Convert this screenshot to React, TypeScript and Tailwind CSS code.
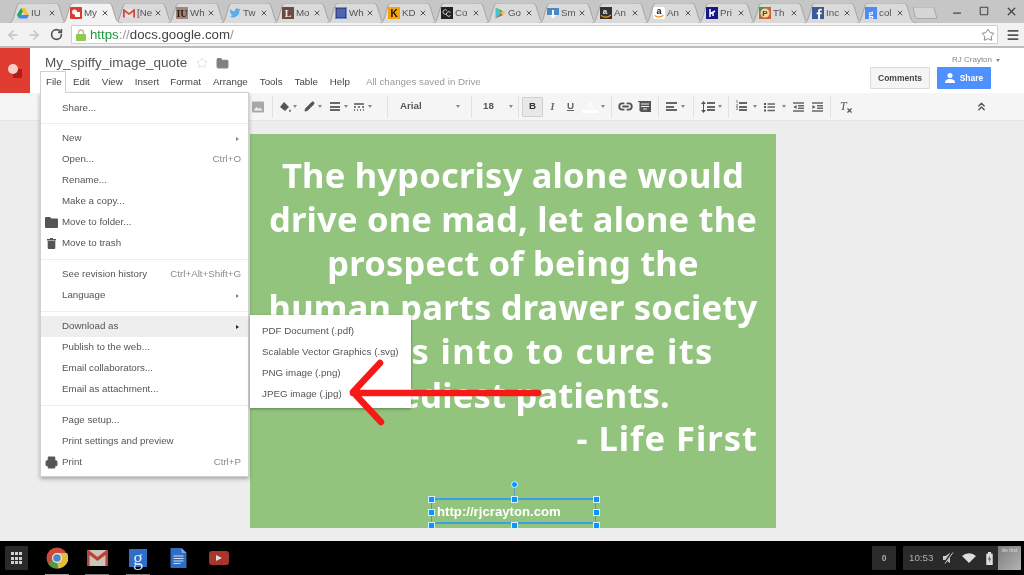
import { ArrowLeft, ArrowRight, RotateCw, Star, X, Minus, Square, ChevronsUp, Link2, Menu, Pencil, Printer, Folder } from "lucide-react";

const tabs = [
  { id: "drive", label: "IU" },
  { id: "docs", label: "My", active: true },
  { id: "gmail", label: "[Ne" },
  { id: "iu", label: "Wh" },
  { id: "twitter", label: "Tw" },
  { id: "l", label: "Mo" },
  { id: "grid", label: "Wh" },
  { id: "k", label: "KD" },
  { id: "cc", label: "Co" },
  { id: "play", label: "Go" },
  { id: "sm", label: "Sm" },
  { id: "amz", label: "An" },
  { id: "amz2", label: "An" },
  { id: "pri", label: "Pri" },
  { id: "p", label: "Th" },
  { id: "fb", label: "Inc" },
  { id: "g", label: "col" },
];

function Favicon({ id }: { id: string }) {
  const box = "w-3 h-3 shrink-0";
  const letter = (bg: string, fg: string, ch: string, family = "Liberation Serif") => (
    <svg viewBox="0 0 12 12" className={box}>
      <rect width="12" height="12" fill={bg} />
      <text x="6" y="10" fontSize="10" fontWeight="700" fill={fg} textAnchor="middle" fontFamily={family}>{ch}</text>
    </svg>
  );
  switch (id) {
    case "drive":
      return (
        <svg viewBox="0 0 12 12" className={box}>
          <path d="M4 1h4l4 7H8z" fill="#f6c42d" />
          <path d="M4 1l2 3.500-4 7L0 8z" fill="#1fa463" />
          <path d="M2 11.500l2-3.500h8l-2 3.500z" fill="#4285f4" />
        </svg>
      );
    case "docs":
      return (
        <svg viewBox="0 0 12 12" className={box}>
          <rect width="12" height="12" rx="1" fill="#dc3b30" />
          <rect x="2" y="2.500" width="5" height="5" rx="2.500" fill="#fff" />
          <rect x="5" y="5" width="5" height="5" fill="#fff" />
        </svg>
      );
    case "gmail":
      return (
        <svg viewBox="0 0 12 12" className={box}>
          <rect y="2" width="12" height="8.500" fill="#e8e4dc" />
          <path d="M0 2v8.500h1.800V5L6 8l4.200-3v5.500H12V2h-1L6 6 1 2z" fill="#d9443a" />
        </svg>
      );
    case "iu":
      return letter("#a1877a", "#2a1c14", "IU");
    case "twitter":
      return (
        <svg viewBox="0 0 24 24" className={box}>
          <path fill="#55acee" d="M23 5c-.8.400-1.700.600-2.600.700.900-.600 1.600-1.400 2-2.500-.900.500-1.900.900-2.900 1.100A4.500 4.500 0 0 0 11.800 8.500C8 8.300 4.700 6.500 2.500 3.800c-1.200 2-.600 4.600 1.400 6-.700 0-1.400-.200-2-.600 0 2.200 1.500 4 3.600 4.500-.700.200-1.400.200-2 .100.600 1.800 2.200 3.100 4.200 3.100A9 9 0 0 1 1 18.800 12.800 12.800 0 0 0 20.700 7.400c.900-.600 1.700-1.400 2.300-2.400z" />
        </svg>
      );
    case "l":
      return letter("#6b4a42", "#f2ece8", "L");
    case "grid":
      return (
        <svg viewBox="0 0 12 12" className={box}>
          <rect width="12" height="12" fill="#6f90cc" />
          <rect x="1" y="1" width="10" height="10" fill="#16227a" />
          <path d="M3 1v10M5 1v10M7 1v10M9 1v10M1 3h10M1 5h10M1 7h10M1 9h10" stroke="#a9bce6" strokeWidth=".5" />
        </svg>
      );
    case "k":
      return letter("#f4a30a", "#111", "K", "Liberation Sans");
    case "cc":
      return (
        <svg viewBox="0 0 12 12" className={box}>
          <rect width="12" height="12" fill="#222" />
          <path d="M6 3.500a2.300 2.300 0 1 0 0 3M9.500 5.500a2.300 2.300 0 1 0 0 3" stroke="#ccc" strokeWidth="1" fill="none" />
        </svg>
      );
    case "play":
      return (
        <svg viewBox="0 0 12 12" className={box}>
          <path d="M1.500 0.500v11l5.500-5.500z" fill="#3bc6d8" />
          <path d="M1.500 0.500l5.500 5.500 2-2z" fill="#4cb058" />
          <path d="M1.500 11.500l5.500-5.500 2 2z" fill="#e2483f" />
          <path d="M9 4l2.500 2L9 8 7 6z" fill="#f6c42d" />
        </svg>
      );
    case "sm":
      return (
        <svg viewBox="0 0 12 12" className={box}>
          <rect y="1" width="12" height="7" fill="#4a88c8" />
          <path d="M5 3h2v5h2l-3 3.500L3 8h2z" fill="#fff" />
        </svg>
      );
    case "amz":
      return (
        <svg viewBox="0 0 12 12" className={box}>
          <rect width="12" height="12" fill="#333" />
          <text x="5" y="7" fontSize="8" fontWeight="700" fill="#eee" textAnchor="middle" fontFamily="Liberation Sans">a</text>
          <path d="M1 8.500c3 2 7 2 10-.500" stroke="#f29a1f" strokeWidth="1.300" fill="none" />
        </svg>
      );
    case "amz2":
      return (
        <svg viewBox="0 0 12 12" className={box}>
          <rect width="12" height="12" rx="2" fill="#fff" />
          <text x="6" y="7" fontSize="9" fontWeight="700" fill="#111" textAnchor="middle" fontFamily="Liberation Sans">a</text>
          <path d="M1.500 8.500c3 2 6 2 9-.300" stroke="#f29a1f" strokeWidth="1.300" fill="none" />
        </svg>
      );
    case "pri":
      return (
        <svg viewBox="0 0 12 12" className={box}>
          <rect width="12" height="12" fill="#16188a" />
          <path d="M4 2v8M4 7l5-3M7 6v3" stroke="#fff" strokeWidth="1.500" fill="none" />
        </svg>
      );
    case "p":
      return (
        <svg viewBox="0 0 12 12" className={box}>
          <rect width="12" height="12" fill="#c8643a" />
          <rect width="6" height="6" fill="#4f8f5a" />
          <circle cx="6" cy="6" r="4.500" fill="#f0d9a0" />
          <text x="6" y="9" fontSize="8" fontWeight="700" fill="#5a3a1a" textAnchor="middle" fontFamily="Liberation Sans">P</text>
        </svg>
      );
    case "fb":
      return (
        <svg viewBox="0 0 12 12" className={box}>
          <rect width="12" height="12" fill="#3b5998" />
          <path d="M8 12V7.300h1.500l.3-1.800H8V4.400c0-.600.200-.900.900-.900h.9V1.900C9.500 1.800 9 1.800 8.400 1.800 7 1.800 6.100 2.600 6.100 4.200v1.300H4.600v1.800h1.500V12z" fill="#fff" />
        </svg>
      );
    default:
      return letter("#4c8bf0", "#fff", "g");
  }
}

function Tab({ id, label, active }: { id: string; label: string; active?: boolean }) {
  return (
    <div className={`relative w-[53px] h-[20px] shrink-0 flex items-center pl-[8px] ${active ? "z-10" : ""}`}>
      <svg viewBox="0 0 60 20" className="absolute left-0 top-0 w-[60px] h-[20px]">
        <path
          d="M0 20 C3 20 3 18 4 16 L8 3 C9 1 10 0 12 0 L46 0 C48 0 49 1 50 3 L54 16 C55 18 56 20 60 20"
          fill={active ? "#f2f2f2" : "#dadada"}
          stroke="#a4a4a4"
          strokeWidth="1"
        />
      </svg>
      <div className="relative flex items-center w-full">
        <Favicon id={id} />
        <span className="ml-[2px] w-[16px] overflow-hidden whitespace-nowrap text-[9.75px] text-[#555]">{label}</span>
        <X size={8} strokeWidth={3} className="ml-[1px] text-[#555]" />
      </div>
    </div>
  );
}

function Caret({ className = "" }: { className?: string }) {
  return <span className={`inline-block w-0 h-0 border-x-[2.500px] border-x-transparent border-t-[3px] border-t-[#888] ${className}`} />;
}

function Lines({ rows }: { rows: number[] }) {
  return (
    <span className="flex flex-col gap-[1.500px]">
      {rows.map((w, i) => (
        <span key={i} className="block h-[2px] bg-[#666]" style={{ width: w }} />
      ))}
    </span>
  );
}

function Group({ w, children, className = "" }: { w: number; children?: React.ReactNode; className?: string }) {
  return (
    <div className={`h-[22px] flex items-center border-r border-[#e2e2e2] shrink-0 ${className}`} style={{ width: w }}>
      {children}
    </div>
  );
}

function Toolbar() {
  return (
    <div className="h-[28px] bg-[#f5f5f5] border-b border-[#e5e5e5] flex items-center pr-[36px] shrink-0">
      <Group w={273} className="justify-end pr-[8px]">
        <svg viewBox="0 0 12 12" className="w-3 h-3">
          <rect width="12" height="11" y=".5" rx="1" fill="#a8a8a8" />
          <path d="M1.500 9.500l3-3.500 2 2 1.500-1.500 2.500 3z" fill="#f0f0f0" />
        </svg>
      </Group>
      <Group w={115} className="pl-[6px]">
        <svg viewBox="0 0 12 12" className="w-[12px] h-[12px]">
          <path d="M5 1l5 5-4 4-5-4z" fill="#555" />
          <path d="M11 8c.700 1 1 1.500 1 2a1 1 0 0 1-2 0c0-.500.300-1 1-2z" fill="#777" />
        </svg>
        <Caret className="ml-[2px]" />
        <Pencil size={11} fill="#555" stroke="#555" className="ml-[7px]" />
        <Caret className="ml-[3px]" />
        <span className="ml-[8px]"><Lines rows={[10, 10, 10]} /></span>
        <Caret className="ml-[4px]" />
        <svg viewBox="0 0 10 8" className="w-[10px] h-[8px] ml-[6px]">
          <path d="M0 1h10M0 4h2M4 4h2M8 4h2M0 7h1M3 7h1M6 7h1M9 7h1" stroke="#555" strokeWidth="1.500" />
        </svg>
        <Caret className="ml-[4px]" />
      </Group>
      <Group w={84} className="pl-[12px]">
        <span className="text-[9.750px] font-bold text-[#555] w-[56px]">Arial</span>
        <Caret />
      </Group>
      <Group w={47} className="pl-[11px]">
        <span className="text-[9.750px] font-bold text-[#555] w-[26px]">18</span>
        <Caret />
      </Group>
      <Group w={93} className="pl-[3px]">
        <span className="w-[21px] h-[20px] flex items-center justify-center bg-[#e8e8e8] border border-[#cfcfcf] rounded-[1px] text-[9.750px] font-black text-[#333]">B</span>
        <span className="ml-[1px] w-[17px] text-center text-[10px] italic font-bold text-[#666] font-['Liberation_Serif']">I</span>
        <span className="ml-[2px] w-[15px] text-center text-[9.750px] font-bold underline text-[#666]">U</span>
        <span className="ml-[4px] w-[16px] flex flex-col items-center">
          <span className="text-[9px] font-bold leading-[10px] text-white">A</span>
          <span className="block w-[16px] h-[3px] bg-white" />
        </span>
        <Caret className="ml-[3px]" />
      </Group>
      <Group w={47} className="pl-[6px]">
        <Link2 size={15} strokeWidth={3} className="text-[#555]" />
        <svg viewBox="0 0 13 12" className="w-[13px] h-[12px] ml-[5px]">
          <path d="M0 0h13v11H2.500v-1H1.500V1H0z" fill="#555" />
          <path d="M3 3h8M3 5.500h8M5 8h4" stroke="#eee" strokeWidth="1" />
        </svg>
      </Group>
      <Group w={35} className="pl-[7px]">
        <Lines rows={[11, 8, 11]} />
        <Caret className="ml-[4px]" />
      </Group>
      <Group w={35} className="pl-[7px]">
        <svg viewBox="0 0 5 12" className="w-[5px] h-[12px]">
          <path d="M2.500 0l2.500 3H3v6h2l-2.500 3L0 9h2V3H0z" fill="#555" />
        </svg>
        <span className="ml-[1px]"><Lines rows={[8, 8, 8]} /></span>
        <Caret className="ml-[3px]" />
      </Group>
      <Group w={102} className="pl-[7px]">
        <span className="flex flex-col text-[3.500px] leading-[3.500px] font-bold text-[#555] w-[3px]">
          <span>1</span><span>2</span><span>3</span>
        </span>
        <Lines rows={[8, 8, 8]} />
        <Caret className="ml-[6px]" />
        <svg viewBox="0 0 11 10" className="w-[11px] h-[10px] ml-[7px]">
          <path d="M0 1h2v2H0zM0 4h2v2H0zM0 7.500h2v2H0z" fill="#555" />
          <path d="M3.500 2H11M3.500 5H11M3.500 8.500H11" stroke="#666" strokeWidth="1.500" />
        </svg>
        <Caret className="ml-[7px]" />
        <svg viewBox="0 0 11 10" className="w-[11px] h-[10px] ml-[7px]">
          <path d="M0 1h11M5 3.700h6M5 6.300h6M0 9h11" stroke="#666" strokeWidth="1.500" />
          <path d="M3.500 3v4L0.500 5z" fill="#555" />
        </svg>
        <svg viewBox="0 0 11 10" className="w-[11px] h-[10px] ml-[8px]">
          <path d="M0 1h11M5 3.700h6M5 6.300h6M0 9h11" stroke="#666" strokeWidth="1.500" />
          <path d="M0.500 3v4l3-2z" fill="#555" />
        </svg>
      </Group>
      <div className="pl-[9px] relative w-[24px] h-[14px] shrink-0">
        <span className="block text-[12px] leading-[12px] italic text-[#555] font-['Liberation_Serif']">T</span>
        <X size={7} strokeWidth={4} className="absolute left-[15px] top-[7px] text-[#555]" />
      </div>
      <ChevronsUp size={13} strokeWidth={2.500} className="ml-auto text-[#555]" />
    </div>
  );
}

type Row = { label?: string; sub?: boolean; keys?: string; icon?: React.ReactNode; active?: boolean; sep?: boolean; tight?: boolean };

const fileMenu: Row[] = [
  { label: "Share..." },
  { sep: true, tight: true },
  { label: "New", sub: true },
  { label: "Open...", keys: "Ctrl+O" },
  { label: "Rename..." },
  { label: "Make a copy..." },
  {
    label: "Move to folder...",
    icon: (
      <svg viewBox="0 0 13 11" className="w-[13px] h-[11px] -ml-[1px]">
        <path d="M0 1a1 1 0 0 1 1-1h4l1.500 1.500H12a1 1 0 0 1 1 1V10a1 1 0 0 1-1 1H1a1 1 0 0 1-1-1z" fill="#555" />
      </svg>
    ),
  },
  {
    label: "Move to trash",
    icon: (
      <svg viewBox="0 0 9 11" className="w-[9px] h-[11px]">
        <path d="M3 0h3v1h3v1.500H0V1h3zM.7 3h7.600v7a1 1 0 0 1-1 1H1.700a1 1 0 0 1-1-1z" fill="#555" />
      </svg>
    ),
  },
  { sep: true },
  { label: "See revision history", keys: "Ctrl+Alt+Shift+G" },
  { label: "Language", sub: true },
  { sep: true },
  { label: "Download as", sub: true, active: true },
  { label: "Publish to the web..." },
  { label: "Email collaborators..." },
  { label: "Email as attachment..." },
  { sep: true },
  { label: "Page setup..." },
  { label: "Print settings and preview" },
  { label: "Print", keys: "Ctrl+P", icon: <Printer size={13} fill="#555" stroke="#555" /> },
];

function FileMenu() {
  return (
    <div className="absolute left-[40px] top-[92px] w-[209px] z-20 bg-white border border-[#d0d0d0] shadow-[0_2px_4px_rgba(0,0,0,0.3)] pt-[5px] pb-[3px] text-[9.750px] text-[#555]">
      {fileMenu.map((r, i) =>
        r.sep ? (
          <div key={i} className={`flex items-center ${r.tight ? "h-[9px]" : "h-[10px]"}`}><div className="w-full h-px bg-[#ececec]" /></div>
        ) : (
          <div key={i} className={`h-[21px] flex items-center pr-[7px] ${r.active ? "bg-[#eeeeee]" : ""}`}>
            <span className="w-[21px] flex justify-center shrink-0">{r.icon}</span>
            <span className="whitespace-nowrap">{r.label}</span>
            {r.keys && <span className="ml-auto text-[#8a8a8a]">{r.keys}</span>}
            {r.sub && (
              <span className={`ml-auto mr-[2px] w-0 h-0 border-y-[2px] border-y-transparent border-l-[3px] ${r.active ? "border-l-[#222]" : "border-l-[#888]"}`} />
            )}
          </div>
        )
      )}
    </div>
  );
}

function SubMenu() {
  return (
    <div className="absolute left-[250px] top-[315px] w-[161px] z-20 bg-white shadow-[0_1px_3px_rgba(0,0,0,0.35)] pt-[5px] pb-[4px] pl-[12px] text-[9.750px] text-[#555]">
      {["PDF Document (.pdf)", "Scalable Vector Graphics (.svg)", "PNG image (.png)", "JPEG image (.jpg)"].map((t) => (
        <div key={t} className="h-[21px] pt-[1px] flex items-center whitespace-nowrap">{t}</div>
      ))}
    </div>
  );
}

function Handle({ x, y }: { x: number; y: number }) {
  return <span className="absolute w-[7px] h-[7px] bg-[#0a95ff] border border-[#d8f0ff]" style={{ left: x - 4, top: y - 4 }} />;
}

function Slide() {
  const handles = [
    [0, 0], [82.5, 0], [165, 0],
    [0, 13], [165, 13],
    [0, 26], [82.5, 26], [165, 26],
  ];
  return (
    <div className="relative ml-[250px] mt-[13px] w-[526px] h-[394px] bg-[#93c47d] shrink-0">
      <div className="pt-[19px] font-['Noto_Sans',sans-serif] font-bold text-[34.500px] leading-[43.900px] tracking-[0.2px] text-white text-center">
        <div className="whitespace-nowrap">The hypocrisy alone would</div>
        <div className="whitespace-nowrap">drive one mad, let alone the</div>
        <div className="whitespace-nowrap">prospect of being the</div>
        <div className="whitespace-nowrap">human parts drawer society</div>
        <div className="whitespace-nowrap tracking-[1.400px]">comes into to cure its</div>
        <div className="whitespace-nowrap">neediest patients.</div>
        <div className="text-right pr-[18px] whitespace-nowrap tracking-[1px]">- Life First</div>
      </div>
      <div className="absolute left-[181px] top-[364px] w-[165px] h-[26px] border-y-2 border-x border-[#3aa0e6]">
        <span className="absolute left-[5px] top-[3px] text-[13.200px] leading-[18px] font-bold text-white whitespace-nowrap">http://rjcrayton.com</span>
        <span className="absolute left-[82px] top-[-16px] w-px h-[15px] bg-[#5aa7b8]" />
        <span className="absolute left-[79px] top-[-19px] w-[7px] h-[7px] rounded-full bg-[#0a95ff] border border-[#d8f0ff]" />
        {handles.map(([x, y]) => (
          <Handle key={`${x}-${y}`} x={x} y={y} />
        ))}
      </div>
    </div>
  );
}

export default function App() {
  return (
    <div className="relative w-[1024px] h-[575px] overflow-hidden flex flex-col bg-[#ededed] font-['Liberation_Sans',Arial,sans-serif] blur-[0.4px]">
      {/* tab strip */}
      <div className="h-[23px] bg-[#c6c6c6] flex items-end pl-[9px] shrink-0 relative">
        {tabs.map((t, i) => (
          <Tab key={i} {...t} />
        ))}
        <svg viewBox="0 0 26 12" className="w-[26px] h-[12px] ml-[2px] mb-[4px]">
          <path d="M1 0h19c1 0 2 1 2.500 3L25 11.500H5C4 11.500 3.500 11 3 9z" fill="#d6d6d6" stroke="#a8a8a8" />
        </svg>
        <div className="ml-auto flex items-center pr-[6px] mb-[4px] gap-[16px] text-[#444]">
          <Minus size={12} strokeWidth={2.500} className="mt-[4px]" />
          <Square size={10} strokeWidth={2.500} />
          <X size={13} strokeWidth={2.500} />
        </div>
      </div>

      {/* address bar */}
      <div className="h-[25px] bg-[#f2f2f2] border-b-2 border-[#bdbdbd] flex items-center pl-[6px] pr-[4px] shrink-0">
        <ArrowLeft size={14} strokeWidth={2.500} className="text-[#c4c4c4]" />
        <ArrowRight size={14} strokeWidth={2.500} className="ml-[7px] text-[#c4c4c4]" />
        <RotateCw size={13} strokeWidth={3} className="ml-[9px] text-[#555]" />
        <div className="ml-[8px] h-[19px] w-[927px] bg-white border border-[#cfcfcf] rounded-[1px] flex items-center pl-[4px] pr-[2px]">
          <svg viewBox="0 0 10 12" className="w-[10px] h-[12px]">
            <path d="M2.500 5V3.500a2.500 2.500 0 0 1 5 0V5" stroke="#b8b8a0" strokeWidth="1.300" fill="none" />
            <rect y="5" width="10" height="7" rx="1" fill="#8fc94f" />
          </svg>
          <span className="ml-[4px] text-[13.250px] whitespace-nowrap">
            <span className="text-[#1a9a3c]">https</span>
            <span className="text-[#999]">://</span>
            <span className="text-[#444]">docs.google.com</span>
            <span className="text-[#999]">/</span>
          </span>
          <Star size={14} strokeWidth={1.500} className="ml-auto text-[#777]" />
        </div>
        <Menu size={14} strokeWidth={3} className="ml-[8px] text-[#555]" />
      </div>

      {/* docs header */}
      <div className="h-[45px] bg-white flex shrink-0">
        <div className="w-[30px] h-full bg-[#e03c31] flex items-center justify-center">
          <svg viewBox="0 0 14 14" className="w-[14px] h-[14px]">
            <rect x="5" y="5" width="9" height="9" fill="#b01e16" />
            <circle cx="5" cy="5" r="5" fill="#f6cfcb" />
          </svg>
        </div>
        <div className="flex flex-col flex-1 pl-[10px] pt-[6px]">
          <div className="flex items-center pl-[5px]">
            <span className="text-[13.500px] leading-[18px] text-[#555]">My_spiffy_image_quote</span>
            <Star size={12} strokeWidth={1.500} className="ml-[9px] text-[#d8d8d8]" />
            <Folder size={13} fill="#808080" stroke="#808080" className="ml-[8px]" />
          </div>
          <div className="flex items-center text-[9.750px] text-[#444] -mt-[1px]">
            <span className="relative z-30 h-[22px] w-[26px] pl-[5px] flex items-center bg-white border border-b-0 border-[#d0d0d0]">File</span>
            <span className="ml-[7px]">Edit</span>
            <span className="ml-[12px]">View</span>
            <span className="ml-[12px]">Insert</span>
            <span className="ml-[11px]">Format</span>
            <span className="ml-[12px]">Arrange</span>
            <span className="ml-[12px]">Tools</span>
            <span className="ml-[12px]">Table</span>
            <span className="ml-[12px]">Help</span>
            <span className="ml-[16px] text-[#9a9a9a]">All changes saved in Drive</span>
          </div>
        </div>
        <div className="flex flex-col items-end pr-[33px] pt-[7px]">
          <div className="flex items-center text-[8px] leading-[10px] text-[#888] -mr-[9px]">
            RJ Crayton
            <Caret className="ml-[4px]" />
          </div>
          <div className="flex mt-[2px]">
            <div className="w-[60px] h-[22px] flex items-center justify-center bg-[#f5f5f5] border border-[#dcdcdc] rounded-[1px] text-[8.500px] font-bold text-[#444]">Comments</div>
            <div className="ml-[7px] w-[54px] h-[22px] flex items-center justify-center bg-[#4d90fe] rounded-[1px] text-[8.500px] font-bold text-white">
              <svg viewBox="0 0 12 10" className="w-[12px] h-[10px] mr-[3px]">
                <circle cx="5" cy="2.500" r="2.500" fill="#fff" />
                <path d="M0 10c0-3 2-4 5-4s5 1 5 4z" fill="#fff" />
              </svg>
              Share
            </div>
          </div>
        </div>
      </div>

      <Toolbar />

      {/* canvas */}
      <div className="flex-1 flex min-h-0">
        <Slide />
      </div>

      {/* shelf */}
      <div className="relative h-[34px] bg-black flex items-center pl-[5px] pr-[3px] shrink-0">
        <div className="w-[23px] h-[24px] bg-[#2a2a2a] rounded-[1px] grid grid-cols-3 gap-[1.500px] p-[6px]">
          {Array.from({ length: 9 }).map((_, i) => (
            <span key={i} className="bg-[#cfcfcf]" />
          ))}
        </div>
        <svg viewBox="0 0 22 22" className="w-[22px] h-[22px] ml-[18px]">
          <circle cx="11" cy="11" r="10.500" fill="#cc4a38" />
          <path d="M11 11L2 16.500a10.500 10.500 0 0 0 10 5z" fill="#4e9a45" />
          <path d="M11 11l1 10.500A10.500 10.500 0 0 0 21 6H11z" fill="#e0bd3d" />
          <circle cx="11" cy="11" r="5" fill="#eee" />
          <circle cx="11" cy="11" r="3.800" fill="#4f86c9" />
        </svg>
        <svg viewBox="0 0 21 16" className="w-[21px] h-[16px] ml-[19px]">
          <rect width="21" height="16" fill="#ccc6b8" />
          <path d="M0 0v16h2.500V5L10.500 11l8-6v11H21V0h-1.500L10.500 7 1.500 0z" fill="#b8433a" />
        </svg>
        <div className="w-[18px] h-[18px] ml-[21px] bg-[#2f6ec4] flex items-center justify-center text-[20px] leading-[18px] text-[#d8e4f5] font-['Liberation_Serif']">g</div>
        <svg viewBox="0 0 16 20" className="w-[17px] h-[20px] ml-[23px]">
          <path d="M0 1a1 1 0 0 1 1-1h10l5 5v14a1 1 0 0 1-1 1H1a1 1 0 0 1-1-1z" fill="#2f6ec4" />
          <path d="M11 0l5 5h-5z" fill="#7ea8de" />
          <path d="M3 8h10M3 10.500h10M3 13h10M3 15.500h7" stroke="#cfdcf0" strokeWidth="1" />
        </svg>
        <div className="w-[20px] h-[14px] ml-[22px] bg-[#a8362d] rounded-[3px] flex items-center justify-center">
          <span className="w-0 h-0 border-y-[3.500px] border-y-transparent border-l-[6px] border-l-[#ddd]" />
        </div>

        <span className="absolute left-[45px] bottom-0 w-[24px] h-px bg-[#999]" />
        <span className="absolute left-[85px] bottom-0 w-[24px] h-px bg-[#777]" />
        <span className="absolute left-[126px] bottom-0 w-[24px] h-px bg-[#777]" />

        <div className="ml-auto w-[24px] h-[24px] bg-[#2a2a2a] rounded-[1px] flex items-center justify-center text-[8.500px] font-bold text-[#aaa]">0</div>
        <div className="ml-[7px] w-[118px] h-[24px] bg-[#2a2a2a] rounded-[1px] flex items-center pl-[6px] overflow-hidden">
          <span className="text-[9.750px] text-[#b0b0b0]">10:53</span>
          <svg viewBox="0 0 12 12" className="w-[12px] h-[12px] ml-[9px]">
            <path d="M1 4h2.500L8 1v10L3.500 8H1z" fill="#ccc" />
            <path d="M2 11.500L10 .5" stroke="#2a2a2a" strokeWidth="2" />
            <path d="M3 11.500L11 .5" stroke="#ccc" strokeWidth="1" />
          </svg>
          <svg viewBox="0 0 14 10" className="w-[14px] h-[10px] ml-[8px]">
            <path d="M0 3a10 10 0 0 1 14 0L7 10z" fill="#ddd" />
          </svg>
          <svg viewBox="0 0 6 12" className="w-[7px] h-[13px] ml-[10px]">
            <path d="M1.500 0h3v1.500H6V12H0V1.500h1.500z" fill="#ddd" />
            <path d="M3.500 3L1.500 7h1.500L2.500 10 4.500 6H3z" fill="#555" />
          </svg>
          <div className="ml-auto w-[23px] h-[24px] bg-linear-to-br from-[#7c7c7c] to-[#b4b4b4] flex items-start justify-center text-[5px] leading-[8px] text-[#ddd]">life first</div>
        </div>
      </div>

      <FileMenu />
      <SubMenu />

      {/* red arrow over the screenshot */}
      <svg viewBox="0 0 1024 575" className="absolute left-0 top-0 w-[1024px] h-[575px] z-30 pointer-events-none">
        <path d="M380 363L353 392L381 422M353 393H538" stroke="#f81818" strokeWidth="6.500" strokeLinecap="round" strokeLinejoin="round" fill="none" />
      </svg>
    </div>
  );
}
